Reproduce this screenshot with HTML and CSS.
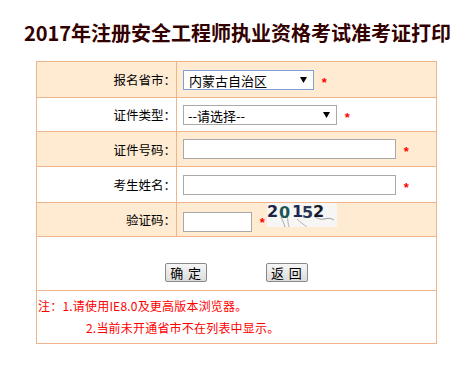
FILE: index.html
```html
<!DOCTYPE html>
<html lang="zh-CN">
<head>
    <meta charset="UTF-8">
    <meta name="viewport" content="width=device-width, initial-scale=1.0">
    <title>准考证打印</title>
    <link rel="stylesheet" href="styles.css">
</head>
<body>
    <h1 class="title">2017年注册安全工程师执业资格考试准考证打印</h1>
    <form class="print-form">
        <table class="form-table">
            <tr class="row-peach row-1">
                <td class="label">报名省市：</td>
                <td class="field">
                    <span class="select-wrap select-focus">
                        <select class="select select-province">
                            <option>内蒙古自治区</option>
                        </select>
                        <svg class="arrow" width="7" height="6" viewBox="0 0 7 6"><path d="M0 0H7L3.5 6Z" fill="#000"/></svg>
                    </span>
                    <span class="req">*</span>
                </td>
            </tr>
            <tr class="row-2">
                <td class="label">证件类型：</td>
                <td class="field">
                    <span class="select-wrap">
                        <select class="select select-type">
                            <option>--请选择--</option>
                        </select>
                        <svg class="arrow" width="7" height="6" viewBox="0 0 7 6"><path d="M0 0H7L3.5 6Z" fill="#000"/></svg>
                    </span>
                    <span class="req">*</span>
                </td>
            </tr>
            <tr class="row-peach row-3">
                <td class="label">证件号码：</td>
                <td class="field">
                    <input class="text text-long" type="text">
                    <span class="req">*</span>
                </td>
            </tr>
            <tr class="row-4">
                <td class="label">考生姓名：</td>
                <td class="field">
                    <input class="text text-long" type="text">
                    <span class="req">*</span>
                </td>
            </tr>
            <tr class="row-peach row-5">
                <td class="label">验证码：</td>
                <td class="field field-code">
                    <input class="text text-code" type="text">
                    <span class="req req-code">*</span>
                    <svg class="captcha" width="70" height="24" viewBox="0 0 70 24">
                        <rect width="70" height="24" fill="#f6f6f4"/>
                        <path d="M14 14 C16 18, 17 21, 18 24" stroke="#a8a8a8" fill="none" stroke-width="1"/>
                        <path d="M20 12 C21 17, 21 21, 22 24" stroke="#b0b0b0" fill="none" stroke-width="1"/>
                        <path d="M30 16 C33 19, 36 21, 40 24" stroke="#b4b4b4" fill="none" stroke-width="1"/>
                        <path d="M47 13 C50 15, 53 17, 57 16 C61 15, 64 15, 67 17" stroke="#9c9c9c" fill="none" stroke-width="1"/>
                        <text x="0" y="14" class="cap-digit" fill="#1c2446">2</text>
                        <text x="12" y="15" class="cap-digit" fill="#1a5656">0</text>
                        <text x="25" y="14" class="cap-digit" fill="#1b2a55">1</text>
                        <text x="35" y="15" class="cap-digit" fill="#2a3554">5</text>
                        <text x="46" y="14" class="cap-digit" fill="#141a2c">2</text>
                    </svg>
                </td>
            </tr>
            <tr class="row-6">
                <td class="actions" colspan="2">
                    <button class="btn" type="button">确&nbsp;定</button>
                    <button class="btn" type="button">返&nbsp;回</button>
                </td>
            </tr>
            <tr class="row-7">
                <td class="notes" colspan="2">
                    <p class="note">注：1.请使用IE8.0及更高版本浏览器。</p>
                    <p class="note note-indent">2.当前未开通省市不在列表中显示。</p>
                </td>
            </tr>
        </table>
    </form>
</body>
</html>
```

FILE: styles.css
```css
* {
    margin: 0;
    padding: 0;
    box-sizing: border-box;
}

body {
    background: #fff;
    font-family: "Noto Sans CJK SC", "Liberation Sans", sans-serif;
    font-size: 12px;
    color: #000;
}

.title {
    padding-top: 20px;
    font-size: 20px;
    line-height: 25px;
    font-weight: bold;
    color: #330000;
    text-align: center;
}

.print-form {
    margin: 16px 0 0 36px;
}

.form-table {
    width: 401px;
    border-collapse: collapse;
    table-layout: fixed;
}

.form-table td {
    border: 1px solid #efb48a;
    padding: 0;
}

.row-peach td {
    background: #feebd2;
}

.row-1 { height: 36px; }
.row-2 { height: 34px; }
.row-3 { height: 35px; }
.row-4 { height: 36px; }
.row-5 { height: 34px; }
.row-6 { height: 54px; }
.row-7 { height: 53px; }

.label {
    width: 140px;
    text-align: right;
    font-size: 12.5px;
}

.field {
    padding-left: 6px !important;
}

.select-wrap {
    position: relative;
    display: inline-block;
    vertical-align: middle;
}

.select {
    appearance: none;
    -webkit-appearance: none;
    display: block;
    height: 20px;
    padding: 0 0 0 4px;
    border: 1px solid #a9a9a9;
    background: #fff;
    font-family: "Noto Sans CJK SC", sans-serif;
    font-size: 13px;
    color: #000;
}

.select-focus .select {
    border-color: #7d9fd6;
    padding-left: 5px;
}

.select-province { width: 131px; }
.select-type { width: 154px; }

.arrow {
    position: absolute;
    right: 7px;
    top: 7px;
}

.text {
    display: inline-block;
    vertical-align: middle;
    height: 20px;
    border: 1px solid #a9a9a9;
    background: #fff;
}

.text-long { width: 213px; }
.text-code { width: 69px; }

.req {
    display: inline-block;
    vertical-align: middle;
    margin-left: 5px;
    padding-top: 5px;
    color: #ff0000;
    font-family: "Liberation Sans", sans-serif;
    font-size: 13px;
    font-weight: bold;
}

.field-code {
    vertical-align: top;
}

.field-code .text-code {
    margin-top: 9px;
    vertical-align: top;
}

.req-code {
    vertical-align: top;
    margin-top: 12px;
    padding-top: 0;
}

.captcha {
    margin-left: 0;
    vertical-align: top;
}

.cap-digit {
    font-family: "DejaVu Sans", sans-serif;
    font-size: 16px;
    font-weight: bold;
}

.actions {
    vertical-align: top;
    padding-top: 26px !important;
    text-align: center;
}

.btn {
    width: 42px;
    height: 19px;
    margin: 0 28px;
    border: 1px solid #8a8a8a;
    border-radius: 2px;
    background: linear-gradient(#f6f6f6, #dcdcdc);
    font-family: "Noto Sans CJK SC", sans-serif;
    font-size: 13px;
    line-height: 17px;
    letter-spacing: 1px;
    color: #000;
}

.notes {
    vertical-align: top;
    padding: 4px 0 0 1px !important;
    color: #ff0000;
}

.note {
    line-height: 22px;
    font-size: 12px;
    letter-spacing: 0.2px;
}

.note-indent {
    padding-left: 48px;
}
```
